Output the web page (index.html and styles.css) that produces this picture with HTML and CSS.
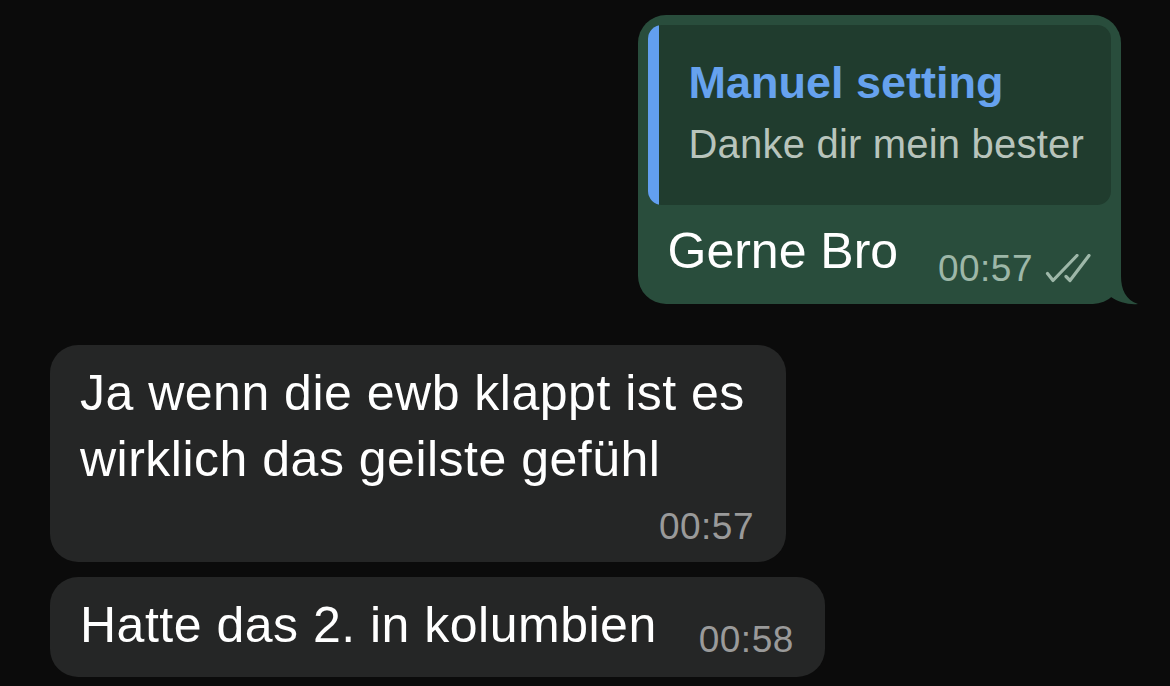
FILE: index.html
```html
<!DOCTYPE html>
<html lang="de">
<head>
<meta charset="utf-8">
<title>Chat</title>
<link rel="stylesheet" href="styles.css">
</head>
<body>
<main class="chat">
  <div class="bubble bubble-out">
    <div class="reply">
      <div class="reply-name">Manuel setting</div>
      <div class="reply-text">Danke dir mein bester</div>
    </div>
    <div class="out-row">
      <span class="msg-text">Gerne Bro</span>
      <span class="meta meta-out">
        <span class="time">00:57</span>
        <svg class="checks" width="46" height="30" viewBox="0 0 46 30" aria-hidden="true">
          <path d="M2.5 19.5 L8 26.5 L32 1.5" fill="none" stroke="currentColor" stroke-width="3.2" stroke-linecap="round" stroke-linejoin="round"/>
          <path d="M21 22.5 L25 26.5 L44 1.5" fill="none" stroke="currentColor" stroke-width="3.2" stroke-linecap="round" stroke-linejoin="round"/>
        </svg>
      </span>
      <svg class="tail" width="46" height="41" viewBox="0 0 46 41" aria-hidden="true">
        <path d="M0 0 H28 V12 C28 26 33 36 45 40 C36 41 25 38 18 33 L0 33 Z" fill="#294d3c"/>
      </svg>
    </div>
  </div>

  <div class="bubble bubble-in bubble-wide">
    <p class="msg-text">Ja wenn die ewb klappt ist es wirklich das geilste gefühl</p>
    <div class="meta meta-in meta-block"><span class="time">00:57</span></div>
  </div>

  <div class="bubble bubble-in in-row">
    <span class="msg-text msg-inline">Hatte das 2. in kolumbien</span>
    <span class="meta meta-in"><span class="time">00:58</span></span>
  </div>
</main>
</body>
</html>
```

FILE: styles.css
```css
* { box-sizing: border-box; }

html, body {
  margin: 0;
  padding: 0;
  background: #0b0b0b;
}

body {
  width: 1170px;
  height: 686px;
  overflow: hidden;
  font-family: "Liberation Sans", Arial, sans-serif;
  color: #ffffff;
}

.chat {
  display: flex;
  flex-direction: column;
  align-items: flex-start;
  padding: 15px 49px 0 50px;
}

.bubble {
  border-radius: 28px;
}

.bubble-out {
  align-self: flex-end;
  position: relative;
  background: #294d3c;
  padding: 10px 10px 13px 10px;
  margin-bottom: 41px;
}

.reply {
  position: relative;
  background: #203c2e;
  border-radius: 14px;
  padding: 32px 27px 37px 41px;
  overflow: hidden;
}

.reply::before {
  content: "";
  position: absolute;
  left: 0;
  top: 0;
  bottom: 0;
  width: 11px;
  background: #629ff0;
}

.reply-name {
  font-size: 45px;
  line-height: 52px;
  font-weight: 700;
  color: #66a2ee;
  white-space: nowrap;
}

.reply-text {
  margin-top: 11px;
  font-size: 40px;
  line-height: 48px;
  letter-spacing: 0.2px;
  color: #b8c4bc;
  white-space: nowrap;
}

.out-row {
  display: flex;
  align-items: flex-end;
  justify-content: space-between;
  margin-top: 16px;
  padding: 0 20px 0 20px;
  height: 70px;
}

.msg-text {
  font-size: 50px;
  line-height: 66px;
  letter-spacing: 0.5px;
  margin: 0;
  color: #ffffff;
}

.out-row .msg-text {
  line-height: 60px;
  letter-spacing: 0;
  margin-bottom: 10px;
}

.meta {
  display: inline-flex;
  align-items: center;
  white-space: nowrap;
}

.time {
  font-size: 37px;
  line-height: 44px;
  letter-spacing: 0.5px;
}

.meta-out {
  color: #9db7a8;
  gap: 12px;
}

.checks {
  display: block;
  margin-top: -1px;
}

.tail {
  position: absolute;
  right: -18px;
  bottom: -1px;
  display: block;
}

.bubble-in {
  background: #252626;
}

.bubble-wide {
  width: 736px;
  padding: 15px 32px 13px 30px;
  margin-bottom: 15px;
}

.meta-in {
  color: #9a9a9a;
}

.meta-block {
  display: flex;
  justify-content: flex-end;
  margin-top: 13px;
}

.in-row {
  display: flex;
  align-items: flex-end;
  gap: 42px;
  padding: 15px 31px 15px 30px;
}

.msg-inline {
  margin-bottom: 4px;
  white-space: nowrap;
}
```
